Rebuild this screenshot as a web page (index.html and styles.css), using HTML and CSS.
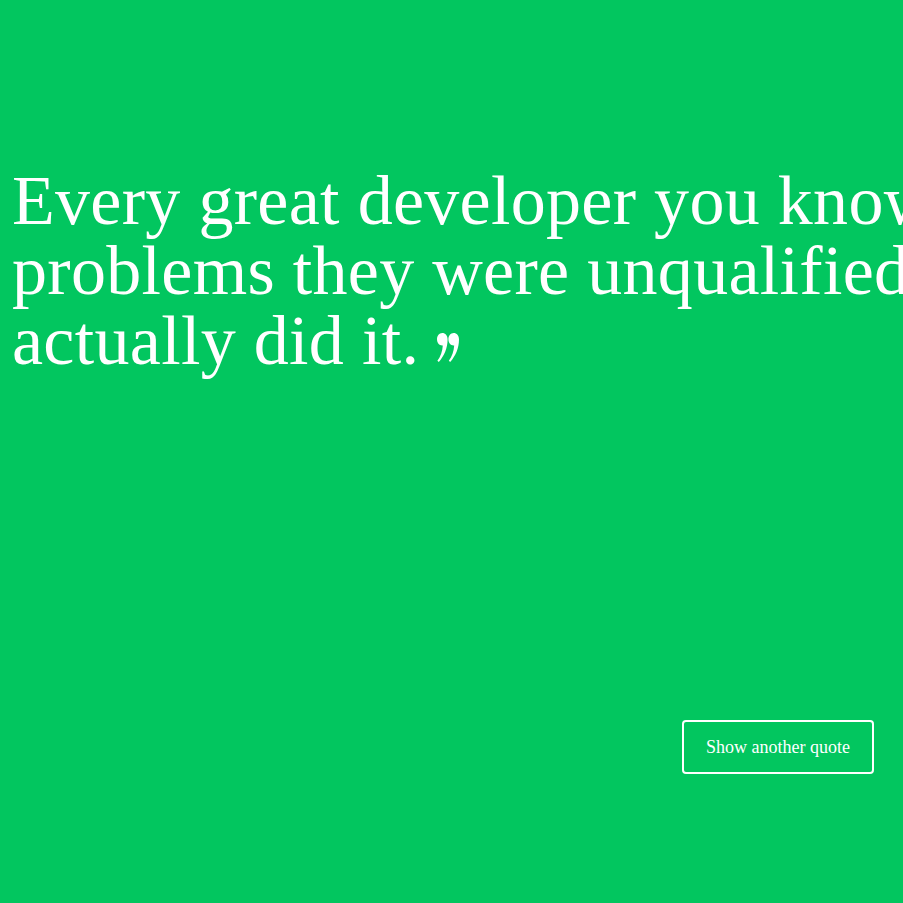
FILE: index.html
```html
<!DOCTYPE html>
<html lang="en">
<head>
<meta charset="utf-8">
<title>Quote</title>
<link rel="stylesheet" href="styles.css">
</head>
<body>
<main class="page">
  <blockquote class="quote">
    <p class="quote-text">Every great developer you know got there by solving<br>problems they were unqualified to solve until they<br>actually did it.<svg class="quote-mark" width="22" height="29" viewBox="0 0 22 29" aria-hidden="true"><path d="M5.2,0 C8.4,0 10.6,2.6 10.6,6.4 C10.6,15 7.2,22.6 1.8,29 L0.4,27.8 C3.6,23.4 5.4,18.4 5.8,12.4 C5.6,12.4 5.4,12.5 5.2,12.5 C2.2,12.5 0,9.8 0,6.3 C0,2.8 2.3,0 5.2,0 Z"/><path transform="translate(11.4 0)" d="M5.2,0 C8.4,0 10.6,2.6 10.6,6.4 C10.6,15 7.2,22.6 1.8,29 L0.4,27.8 C3.6,23.4 5.4,18.4 5.8,12.4 C5.6,12.4 5.4,12.5 5.2,12.5 C2.2,12.5 0,9.8 0,6.3 C0,2.8 2.3,0 5.2,0 Z"/></svg></p>
  </blockquote>
  <div class="actions">
    <button class="btn" type="button">Show another quote</button>
  </div>
</main>
</body>
</html>
```
FILE: styles.css
```css
html, body {
  margin: 0;
  padding: 0;
  height: 100%;
  overflow: hidden;
}
body {
  background: #02c65f;
  color: #ffffff;
  font-family: "Liberation Serif", "Times New Roman", serif;
}
.page {
  display: flex;
  flex-direction: column;
  padding-top: 166px;
}
.quote {
  margin: 0;
  padding: 0 0 0 12px;
}
.quote-text {
  margin: 0;
  font-size: 70px;
  line-height: 70px;
  white-space: nowrap;
  font-weight: 400;
  letter-spacing: 0.3px;
}
.quote-mark {
  fill: #ffffff;
  margin-left: 18px;
  vertical-align: 2px;
}
.actions {
  display: flex;
  justify-content: flex-end;
  padding-right: 29px;
  margin-top: 344px;
}
.btn {
  background: transparent;
  color: #ffffff;
  border: 2px solid #ffffff;
  border-radius: 4px;
  font-family: "Liberation Serif", "Times New Roman", serif;
  font-size: 18px;
  line-height: 22px;
  padding: 14px 22px;
  width: 192px;
  cursor: pointer;
}
```
